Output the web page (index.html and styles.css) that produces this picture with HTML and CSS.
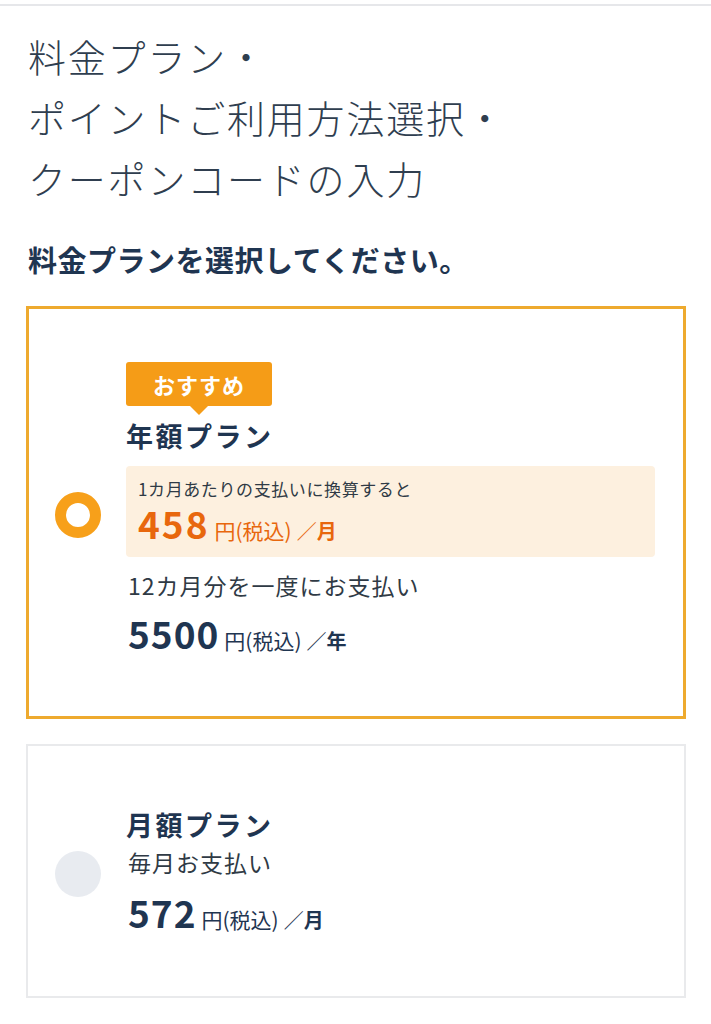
FILE: index.html
```html
<!DOCTYPE html>
<html lang="ja">
<head>
<meta charset="utf-8">
<link rel="stylesheet" href="styles.css">
</head>
<body>
<div class="topline"></div>
<main class="page">
  <h1 class="title">料金プラン・<br>ポイントご利用方法選択・<br>クーポンコードの入力</h1>
  <h2 class="subtitle">料金プランを選択してください。</h2>

  <section class="plan plan-selected">
    <div class="radio radio-on"></div>
    <div class="plan-body">
      <div class="badge">おすすめ</div>
      <div class="plan-name">年額プラン</div>
      <div class="monthly-box">
        <div class="monthly-note">1カ月あたりの支払いに換算すると</div>
        <div class="price price-orange"><span class="num">458</span><span class="unit">円(税込)</span><span class="slash">／</span><span class="per">月</span></div>
      </div>
      <div class="desc">12カ月分を一度にお支払い</div>
      <div class="price"><span class="num">5500</span><span class="unit">円(税込)</span><span class="slash">／</span><span class="per">年</span></div>
    </div>
  </section>

  <section class="plan plan-plain">
    <div class="radio radio-off"></div>
    <div class="plan-body">
      <div class="plan-name">月額プラン</div>
      <div class="desc desc-tight">毎月お支払い</div>
      <div class="price"><span class="num">572</span><span class="unit">円(税込)</span><span class="slash">／</span><span class="per">月</span></div>
    </div>
  </section>
</main>
</body>
</html>
```

FILE: styles.css
```css
* { box-sizing: border-box; }
html, body { margin: 0; padding: 0; background: #ffffff; }
body {
  font-family: "Noto Sans CJK JP", "Noto Sans", sans-serif;
  color: #1f3551;
  padding-top: 4px;
}
.topline { height: 2px; background: #e6e7ea; }
.page { padding: 0 25px 0 26px; }
.title {
  margin: 19px 0 0 2px;
  font-size: 38px;
  line-height: 61px;
  font-weight: 300;
  color: #2f3e4f;
  letter-spacing: 1.8px;
}
.subtitle {
  margin: 31px 0 0 2px;
  font-size: 29px;
  line-height: 40px;
  font-weight: 700;
  color: #1f3551;
  letter-spacing: 0.5px;
}
.plan {
  display: flex;
  align-items: center;
  background: #fff;
}
.plan-selected {
  margin-top: 27px;
  border: 3px solid #eeaa2e;
  height: 413px;
  padding-bottom: 8px;
}
.plan-plain {
  margin-top: 25px;
  border: 2px solid #e9eaec;
  height: 254px;
  padding-bottom: 14px;
}
.radio {
  width: 46px;
  height: 46px;
  border-radius: 50%;
  margin-right: 25px;
  flex: none;
}
.radio-on { border: 11px solid #f7a01a; background: #fff; }
.radio-off { background: #e8ebf0; }
.plan-selected .radio { margin-left: 26px; margin-top: 12px; }
.plan-plain .radio { margin-left: 27px; margin-top: 20px; }
.plan-body { flex: 1; padding-right: 28px; }
.badge {
  position: relative;
  display: inline-block;
  background: #f59c17;
  color: #fff;
  font-weight: 700;
  font-size: 22px;
  line-height: 44px;
  padding: 0 27px;
  border-radius: 3px;
  letter-spacing: 1px;
}
.badge::after {
  content: "";
  position: absolute;
  left: 50%;
  bottom: -9px;
  margin-left: -9px;
  border-left: 9px solid transparent;
  border-right: 9px solid transparent;
  border-top: 9px solid #f59c17;
}
.plan-name {
  font-size: 27px;
  font-weight: 700;
  line-height: 40px;
  margin-top: 10px;
  color: #1f3551;
  letter-spacing: 2.5px;
}
.monthly-box {
  background: #fdf0df;
  border-radius: 4px;
  margin-top: 10px;
  padding: 11px 12px 10px;
  height: 91px;
}
.monthly-note {
  font-size: 17px;
  line-height: 24px;
  color: #2f3a45;
  letter-spacing: 0.6px;
}
.price {
  display: flex;
  align-items: baseline;
  color: #1f3551;
}
.num {
  font-size: 37px;
  font-weight: 700;
  line-height: 44px;
  letter-spacing: 1px;
}
.price-orange .num { letter-spacing: 2px; }
.unit {
  font-size: 21px;
  margin-left: 5px;
}
.slash {
  font-size: 20px;
  margin-left: 5px;
}
.per {
  font-size: 20px;
  font-weight: 700;
}
.price-orange { color: #e8670d; }
.desc {
  font-size: 23px;
  line-height: 34px;
  margin-top: 11px;
  color: #2f3a45;
  margin-left: 2px;
  letter-spacing: 1px;
}
.desc + .price { margin-top: 9px; margin-left: 2px; }
.desc-tight { margin-top: 0; }
.plan-plain .desc + .price { margin-top: 11px; }
```
